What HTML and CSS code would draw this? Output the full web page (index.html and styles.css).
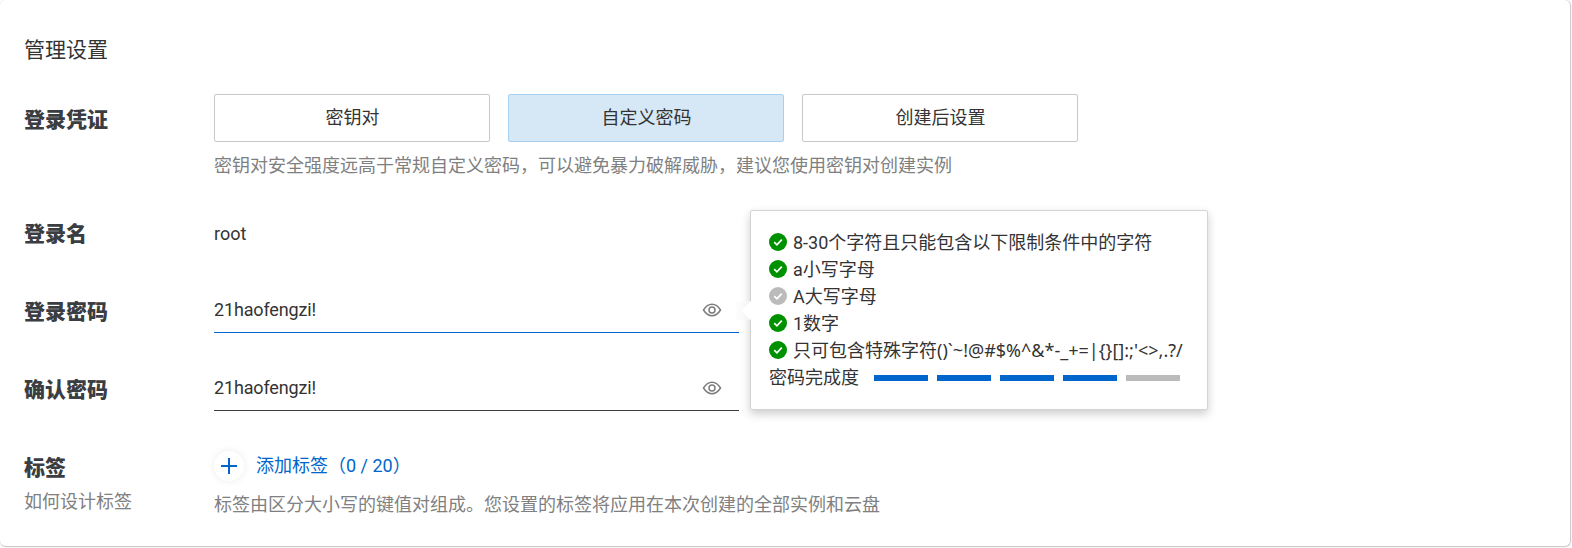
FILE: index.html
```html
<!DOCTYPE html>
<html lang="zh-CN">
<head>
<meta charset="utf-8">
<title>管理设置</title>
<link rel="stylesheet" href="styles.css">
</head>
<body>
<main class="card">
  <h2 class="title">管理设置</h2>

  <section class="row row-cred">
    <div class="label">登录凭证</div>
    <div class="field">
      <div class="choices">
        <button class="choice">密钥对</button>
        <button class="choice active">自定义密码</button>
        <button class="choice">创建后设置</button>
      </div>
      <p class="hint hint-cred">密钥对安全强度远高于常规自定义密码，可以避免暴力破解威胁，建议您使用密钥对创建实例</p>
    </div>
  </section>

  <section class="row row-name">
    <div class="label">登录名</div>
    <div class="field value">root</div>
  </section>

  <section class="row row-pass">
    <div class="label">登录密码</div>
    <div class="field input focus">
      <span class="input-text">21haofengzi!</span>
      <svg class="eye" viewBox="0 0 20 20" width="20" height="20"><path d="M1.500 10C4 6 6.800 4.200 10 4.200S16 6 18.500 10C16 14 13.200 15.800 10 15.800S4 14 1.500 10Z" fill="none" stroke="#7d7d7d" stroke-width="1.500"/><circle cx="10" cy="10" r="3" fill="none" stroke="#7d7d7d" stroke-width="1.500"/></svg>
    </div>
  </section>

  <section class="row row-confirm">
    <div class="label">确认密码</div>
    <div class="field input">
      <span class="input-text">21haofengzi!</span>
      <svg class="eye" viewBox="0 0 20 20" width="20" height="20"><path d="M1.500 10C4 6 6.800 4.200 10 4.200S16 6 18.500 10C16 14 13.200 15.800 10 15.800S4 14 1.500 10Z" fill="none" stroke="#7d7d7d" stroke-width="1.500"/><circle cx="10" cy="10" r="3" fill="none" stroke="#7d7d7d" stroke-width="1.500"/></svg>
    </div>
  </section>

  <section class="row row-tags">
    <div class="label-stack">
      <div class="label">标签</div>
      <div class="sublabel">如何设计标签</div>
    </div>
    <div class="field">
      <div class="add">
        <span class="plus"><svg viewBox="0 0 16 16" width="16" height="16"><path d="M8 0v16M0 8h16" stroke="#0066cc" stroke-width="2" fill="none"/></svg></span>
        <span class="add-text">添加标签（0 / 20）</span>
      </div>
      <p class="hint hint-tags">标签由区分大小写的键值对组成。您设置的标签将应用在本次创建的全部实例和云盘</p>
    </div>
  </section>

  <aside class="popover">
    <span class="arrow"></span>
    <ul class="rules">
      <li class="rule"><svg class="tick" viewBox="0 0 18 18" width="18" height="18"><circle cx="9" cy="9" r="9" fill="#009100"/><path d="M5.200 9.200l2.700 2.600 4.900-5.200" fill="none" stroke="#fff" stroke-width="1.700"/></svg>8-30个字符且只能包含以下限制条件中的字符</li>
      <li class="rule"><svg class="tick" viewBox="0 0 18 18" width="18" height="18"><circle cx="9" cy="9" r="9" fill="#009100"/><path d="M5.200 9.200l2.700 2.600 4.900-5.200" fill="none" stroke="#fff" stroke-width="1.700"/></svg>a小写字母</li>
      <li class="rule"><svg class="tick" viewBox="0 0 18 18" width="18" height="18"><circle cx="9" cy="9" r="9" fill="#bbbbbb"/><path d="M5.200 9.200l2.700 2.600 4.900-5.200" fill="none" stroke="#fff" stroke-width="1.700"/></svg>A大写字母</li>
      <li class="rule"><svg class="tick" viewBox="0 0 18 18" width="18" height="18"><circle cx="9" cy="9" r="9" fill="#009100"/><path d="M5.200 9.200l2.700 2.600 4.900-5.200" fill="none" stroke="#fff" stroke-width="1.700"/></svg>1数字</li>
      <li class="rule rule-symbols"><svg class="tick" viewBox="0 0 18 18" width="18" height="18"><circle cx="9" cy="9" r="9" fill="#009100"/><path d="M5.200 9.200l2.700 2.600 4.900-5.200" fill="none" stroke="#fff" stroke-width="1.700"/></svg>只可包含特殊字符()`~!@#$%^&amp;*-_+=|{}[]:;'&lt;&gt;,.?/</li>
    </ul>
    <div class="strength">
      <span class="strength-label">密码完成度</span>
      <span class="bars"><i class="bar on"></i><i class="bar on"></i><i class="bar on"></i><i class="bar on"></i><i class="bar"></i></span>
    </div>
  </aside>
</main>
</body>
</html>
```

FILE: styles.css
```css
* { box-sizing: border-box; }
html, body { margin: 0; padding: 0; background: #fff; }
body {
  font-family: Roboto, "Noto Sans CJK SC", sans-serif;
  color: #333;
  font-size: 18px;
  line-height: 28px;
  width: 1572px;
  height: 548px;
  overflow: hidden;
}
.card {
  position: relative;
  height: 547px;
  width: 1571px;
  padding: 36px 0 0 24px;
  border-right: 1px solid #ccc;
  border-bottom: 1px solid #ccc;
  border-radius: 6px;
  box-shadow: 0 0 2px rgba(0,0,0,.14);
}
.title { margin: 0 0 30px; font-size: 21px; font-weight: 400; line-height: 28px; color: #333; }
.row { display: flex; align-items: flex-start; }
.label { width: 190px; flex: none; font-size: 21px; font-weight: 900; line-height: 28px; color: #3a3d42; }
.label-stack { width: 190px; flex: none; }
.sublabel { font-size: 18px; line-height: 28px; color: #808080; margin-top: 6px; }
.field { flex: none; }
.row-cred .label { margin-top: 12px; }
.choices { display: flex; gap: 18px; }
.choice {
  width: 276px; height: 48px; padding: 0 0 0 1px;
  font: inherit; color: #333;
  background: #fff;
  border: 1px solid #c8c8c8;
  border-radius: 2px;
}
.choice.active { background: #d6e8f6; border-color: #a9d0ee; }
.hint { margin: 0; color: #808080; font-size: 18px; line-height: 28px; }
.hint-cred { margin-top: 10px; }
.row-name { margin-top: 39px; }
.row-name .label { margin-top: 1px; }
.value { line-height: 28px; padding-top: 1px; }
.row-pass { margin-top: 40px; }
.row-confirm { margin-top: 33px; }
.row-pass .label, .row-confirm .label { margin-top: 10px; }
.input {
  width: 525px; height: 45px;
  display: flex; align-items: center; justify-content: space-between;
  padding: 0 17px 0 0;
  border-bottom: 1px solid #3a3d42;
}
.input-text { letter-spacing: -0.15px; }
.input.focus { border-bottom-color: #0066cc; }
.row-tags { margin-top: 39px; }
.row-tags .label { padding-top: 4px; }
.add { display: flex; align-items: center; gap: 12px; height: 32px; }
.plus {
  width: 30px; height: 30px; border-radius: 50%;
  display: flex; align-items: center; justify-content: center;
  background: #fff; box-shadow: 0 0 8px rgba(0,0,0,.08);
}
.add-text { color: #0066cc; }
.hint-tags { margin-top: 9px; }
.popover {
  position: absolute; left: 750px; top: 210px;
  width: 458px; height: 200px;
  padding: 18px 18px 0 18px;
  background: #fff;
  border: 1px solid #d4d4d4;
  border-radius: 2px;
  box-shadow: 0 4px 10px rgba(0,0,0,.2);
}
.popover::before {
  content: "";
  position: absolute; left: -17px; top: 90px;
  width: 16px; height: 19px;
  background: linear-gradient(to right, #fff, #f4f4f4);
}
.arrow {
  position: absolute; left: -7px; top: 93px;
  width: 13px; height: 13px;
  background: #fff; transform: rotate(45deg);
}
.rules { list-style: none; margin: 0; padding: 0; }
.rule { display: flex; align-items: center; gap: 6px; height: 27px; line-height: 27px; white-space: nowrap; }
.rule-symbols { font-family: "Noto Sans", "Noto Sans CJK SC", sans-serif; }
.tick { flex: none; margin-top: -2px; }
.strength { display: flex; align-items: center; height: 27px; margin-top: 0; }
.strength-label { width: 105px; flex: none; }
.bars { display: flex; gap: 9px; }
.bar { display: block; width: 54px; height: 6px; background: #bbb; }
.bar.on { background: #0066cc; }
```
